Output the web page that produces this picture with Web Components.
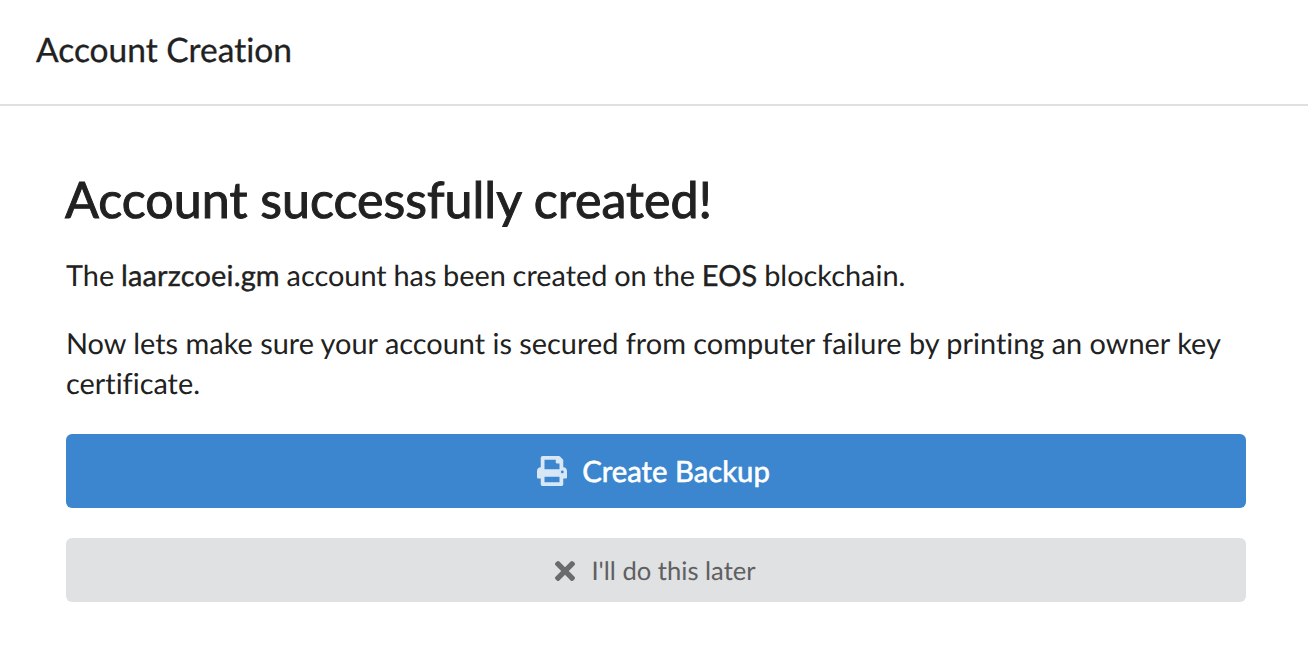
<!DOCTYPE html>
<html>
<head>
<meta charset="utf-8">
<style>
  html, body { margin: 0; background: #fff; }
  body { font-family: Lato, sans-serif; color: #212121; text-rendering: geometricPrecision; }
</style>
</head>
<body>
<app-header>Account Creation</app-header>
<main-panel>
  <h-title>Account successfully created!</h-title>
  <text-line tight>The <b>laarzcoei.gm</b> account has been created on the <b>EOS</b> blockchain.</text-line>
  <text-line>Now lets make sure your account is secured from computer failure by printing an owner key certificate.</text-line>
  <action-button kind="primary" icon="print">Create Backup</action-button>
  <action-button kind="secondary" icon="close">I'll do this later</action-button>
</main-panel>
<script>
class AppHeader extends HTMLElement {
  connectedCallback() {
    this.attachShadow({ mode: 'open' }).innerHTML = `
      <style>
        :host { display: flex; align-items: center; height: 106px; box-sizing: border-box;
          padding: 0 36px 4px; border-bottom: 2px solid #e0e0e0; font-size: 33.5px; color: #212121;
          font-variant-ligatures: none; -webkit-text-stroke: 0.3px #212121; }
      </style><slot></slot>`;
  }
}
class MainPanel extends HTMLElement {
  connectedCallback() {
    this.attachShadow({ mode: 'open' }).innerHTML = `
      <style>
        :host { display: flex; flex-direction: column; padding: 0 62px 0 65px; }
      </style><slot></slot>`;
  }
}
class HTitle extends HTMLElement {
  connectedCallback() {
    this.attachShadow({ mode: 'open' }).innerHTML = `
      <style>
        :host { display: block; font-size: 50.2px; line-height: 58px; margin: 64px 0 28px;
          font-variant-ligatures: none; -webkit-text-stroke: 1px #212121; }
      </style><slot></slot>`;
  }
}
class TextLine extends HTMLElement {
  connectedCallback() {
    this.attachShadow({ mode: 'open' }).innerHTML = `
      <style>
        :host { display: block; font-size: 28.9px; line-height: 40px; margin-bottom: 28px;
          padding-left: 1px; font-variant-ligatures: none; }
        :host([tight]) { word-spacing: -0.7px; }
        ::slotted(b) { font-weight: 400; letter-spacing: 0.2px; -webkit-text-stroke: 0.4px #212121; }
      </style><slot></slot>`;
  }
}
const icons = {
  print: '<svg width="30" height="30" viewBox="0 0 512 512" fill="currentColor"><path d="M448 192V77.25c0-8.49-3.37-16.62-9.37-22.63L393.37 9.37c-6-6-14.14-9.37-22.63-9.37H96C78.33 0 64 14.33 64 32v160c-35.35 0-64 28.65-64 64v112c0 8.84 7.16 16 16 16h48v96c0 17.67 14.33 32 32 32h320c17.67 0 32-14.33 32-32v-96h48c8.84 0 16-7.16 16-16V256c0-35.35-28.65-64-64-64zm-64 256H128v-96h256v96zm0-224H128V64h192v48c0 8.84 7.16 16 16 16h48v96zm48 72c-13.25 0-24-10.75-24-24 0-13.26 10.75-24 24-24s24 10.74 24 24c0 13.25-10.75 24-24 24z"/></svg>',
  close: '<svg width="20" height="20" viewBox="0 80 352 352" fill="currentColor"><path d="M242.72 256l100.07-100.07c12.28-12.28 12.28-32.19 0-44.48l-22.24-22.24c-12.28-12.28-32.19-12.28-44.48 0L176 189.28 75.93 89.21c-12.28-12.28-32.19-12.28-44.48 0L9.21 111.45c-12.28 12.28-12.28 32.19 0 44.48L109.28 256 9.21 356.07c-12.28 12.28-12.28 32.19 0 44.48l22.24 22.24c12.28 12.28 32.2 12.28 44.48 0L176 322.72l100.07 100.07c12.28 12.28 32.2 12.28 44.48 0l22.24-22.24c12.28-12.28 12.28-32.19 0-44.48L242.72 256z"/></svg>'
};
class ActionButton extends HTMLElement {
  connectedCallback() {
    const primary = this.getAttribute('kind') === 'primary';
    this.attachShadow({ mode: 'open' }).innerHTML = `
      <style>
        :host { display: flex; align-items: center; justify-content: center;
          gap: ${primary ? 15 : 16}px;
          box-sizing: border-box;
          border-radius: 6px; height: ${primary ? 74 : 64}px;
          margin-left: 1px;
          padding: ${primary ? '0 5px 0 0' : '2px 1px 0 0'};
          margin-top: ${primary ? 2 : 0}px;
          margin-bottom: ${primary ? 30 : 0}px;
          background: ${primary ? '#3b86cf' : '#e0e1e3'};
          color: ${primary ? '#fff' : '#5f6062'};
          font-size: ${primary ? 29.3 : 25.6}px;
          font-variant-ligatures: none;
          -webkit-text-stroke: ${primary ? '0.6px #fff' : '0'}; }
        .icon { display: flex; color: ${primary ? '#d8e7f6' : '#6a6b6d'}; -webkit-text-stroke: 0; }
      </style>
      <span class="icon">${icons[this.getAttribute('icon')]}</span><slot></slot>`;
  }
}
customElements.define('app-header', AppHeader);
customElements.define('main-panel', MainPanel);
customElements.define('h-title', HTitle);
customElements.define('text-line', TextLine);
customElements.define('action-button', ActionButton);
</script>
</body>
</html>
